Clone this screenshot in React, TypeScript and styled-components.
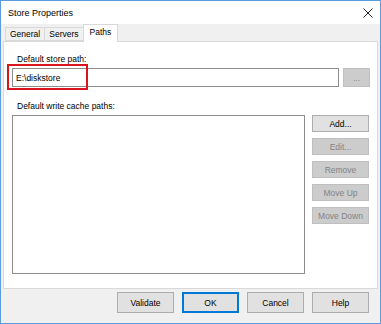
import React from 'react';
import styled, { createGlobalStyle } from 'styled-components';

const GlobalStyle = createGlobalStyle`
    html, body {
        margin: 0;
        padding: 0;
        background: #ffffff;
    }
    body {
        font-family: "Liberation Sans", Arial, sans-serif;
        font-size: 8.5px;
        color: #000000;
    }
`;

const Window = styled.div`
    width: 381px;
    height: 324px;
    box-sizing: border-box;
    border: 1px solid #5c9de0;
    display: flex;
    flex-direction: column;
    background: #f0f0f0;
`;

const TitleBar = styled.div`
    height: 23px;
    flex: none;
    background: #ffffff;
    display: flex;
    align-items: center;
    justify-content: space-between;
    padding: 0 7px 0 7px;
    font-size: 9px;
`;

const CloseIcon = () => (
    <svg width="10" height="10" viewBox="0 0 10 10">
        <path d="M0.5 0.5 L9.5 9.5 M9.5 0.5 L0.5 9.5" stroke="#222" strokeWidth="1" fill="none" />
    </svg>
);

const Body = styled.div`
    flex: 1;
    display: flex;
    flex-direction: column;
    padding: 0 2px;
`;

const TabStrip = styled.div`
    height: 17px;
    flex: none;
    display: flex;
    align-items: flex-end;
    padding-left: 2px;
    position: relative;
    z-index: 1;
`;

const Tab = styled.div<{ $active?: boolean }>`
    box-sizing: border-box;
    height: ${({ $active }) => ($active ? '18px' : '14px')};
    margin: ${({ $active }) => ($active ? '0 0 -1px -1px' : '0 0 0 -1px')};
    padding: ${({ $active }) => ($active ? '2px 6px 0' : '1px 4px 0')};
    background: ${({ $active }) => ($active ? '#ffffff' : '#f0f0f0')};
    border: 1px solid #d9d9d9;
    border-bottom: ${({ $active }) => ($active ? 'none' : '1px solid #d9d9d9')};
    &:first-child {
        margin-left: 0;
    }
`;

const Panel = styled.div`
    height: 248px;
    box-sizing: border-box;
    flex: none;
    background: #ffffff;
    border: 1px solid #d9d9d9;
    display: flex;
    flex-direction: column;
    padding: 0 7px 0 8px;
`;

const Label = styled.div<{ $top: number }>`
    margin: ${({ $top }) => $top}px 0 0 5px;
    height: 11px;
    line-height: 11px;
`;

const PathRow = styled.div`
    display: flex;
    align-items: center;
    gap: 4px;
    margin-top: 3px;
`;

const FieldWrap = styled.div`
    position: relative;
    flex: 1;
`;

const TextBox = styled.div`
    height: 19px;
    box-sizing: border-box;
    border: 1px solid #8c8c8c;
    padding: 0 3px;
    display: flex;
    align-items: center;
`;

const Highlight = styled.div`
    position: absolute;
    left: -5px;
    top: -4px;
    width: 81px;
    height: 26px;
    box-sizing: border-box;
    border: 2px solid #d8141c;
    pointer-events: none;
`;

const Button = styled.div<{ $disabled?: boolean; $default?: boolean; $w?: number; $h?: number }>`
    box-sizing: border-box;
    width: ${({ $w }) => $w ?? 57}px;
    height: ${({ $h }) => $h ?? 17}px;
    flex: none;
    display: flex;
    align-items: center;
    justify-content: center;
    background: ${({ $disabled }) => ($disabled ? '#cccccc' : '#e1e1e1')};
    color: ${({ $disabled }) => ($disabled ? '#838383' : '#000000')};
    border: ${({ $disabled, $default }) =>
        $default ? '2px solid #0078d7' : $disabled ? '1px solid #bfbfbf' : '1px solid #adadad'};
`;

const ListRow = styled.div`
    display: flex;
    gap: 7px;
    margin-top: 3px;
`;

const ListBox = styled.div`
    width: 293px;
    height: 159px;
    box-sizing: border-box;
    border: 1px solid #8c8c8c;
    background: #ffffff;
`;

const ButtonColumn = styled.div`
    display: flex;
    flex-direction: column;
    gap: 6px;
`;

const Footer = styled.div`
    flex: 1;
    display: flex;
    justify-content: flex-end;
    align-items: flex-start;
    gap: 8px;
    padding: 3px 9px 0 0;
`;

const App = () => {
    const sideButtons = [
        { label: 'Add...', disabled: false },
        { label: 'Edit...', disabled: true },
        { label: 'Remove', disabled: true },
        { label: 'Move Up', disabled: true },
        { label: 'Move Down', disabled: true },
    ];

    return (
        <Window>
            <GlobalStyle />
            <TitleBar>
                <span>Store Properties</span>
                <CloseIcon />
            </TitleBar>
            <Body>
                <TabStrip>
                    <Tab>General</Tab>
                    <Tab>Servers</Tab>
                    <Tab $active>Paths</Tab>
                </TabStrip>
                <Panel>
                    <Label $top={12}>Default store path:</Label>
                    <PathRow>
                        <FieldWrap>
                            <TextBox>E:\diskstore</TextBox>
                            <Highlight />
                        </FieldWrap>
                        <Button $disabled $w={27} $h={19}>...</Button>
                    </PathRow>
                    <Label $top={14}>Default write cache paths:</Label>
                    <ListRow>
                        <ListBox />
                        <ButtonColumn>
                            {sideButtons.map(b => (
                                <Button key={b.label} $disabled={b.disabled}>{b.label}</Button>
                            ))}
                        </ButtonColumn>
                    </ListRow>
                </Panel>
                <Footer>
                    <Button $h={21}>Validate</Button>
                    <Button $h={21} $default>OK</Button>
                    <Button $h={21}>Cancel</Button>
                    <Button $h={21}>Help</Button>
                </Footer>
            </Body>
        </Window>
    );
};

export default App;
